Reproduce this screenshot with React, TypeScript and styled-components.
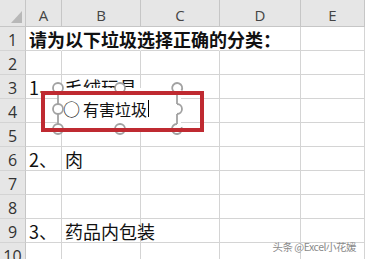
import * as React from 'react';
import styled, { createGlobalStyle } from 'styled-components';

const GlobalStyle = createGlobalStyle`
	html, body {
		margin: 0;
		padding: 0;
		background: #fff;
		overflow: hidden;
	}
`;

const columns = ['A', 'B', 'C', 'D', 'E'];

// cell text per row, keyed by column
const rows: { [row: number]: { [col: string]: string } } = {
	1: { A: '请为以下垃圾选择正确的分类：' },
	3: { A: '1、', B: '毛绒玩具' },
	6: { A: '2、', B: '肉' },
	9: { A: '3、', B: '药品内包装' }
};

const Page = styled.div`
	position: relative;
	width: 365px;
	height: 259px;
	overflow: hidden;
	font-family: 'Noto Sans CJK SC', 'Noto Sans', sans-serif;
`;

const Sheet = styled.div`
	display: grid;
	grid-template-columns: 26px 36px 79px 79px 81px 64px;
	grid-template-rows: 27px repeat(10, 24px);
`;

const Corner = styled.div`
	position: relative;
	background: #e6e6e6;
	border-right: 1px solid #c6c6c6;
	border-bottom: 1px solid #c6c6c6;
`;

const CornerMark = styled.div`
	position: absolute;
	right: 3px;
	bottom: 3px;
	width: 0;
	height: 0;
	border-left: 11px solid transparent;
	border-bottom: 12px solid #b8b8b8;
`;

const ColHeader = styled.div`
	display: flex;
	align-items: center;
	justify-content: center;
	padding-top: 3px;
	background: #e6e6e6;
	border-right: 1px solid #c6c6c6;
	border-bottom: 1px solid #c6c6c6;
	font-family: 'Open Sans', 'Noto Sans', sans-serif;
	font-size: 15px;
	color: #444;
`;

const RowHeader = styled.div`
	display: flex;
	align-items: center;
	justify-content: center;
	padding-top: 3px;
	background: #e6e6e6;
	border-right: 1px solid #c6c6c6;
	border-bottom: 1px solid #d4d4d4;
	font-family: 'Open Sans', 'Noto Sans', sans-serif;
	font-size: 16px;
	color: #333;
`;

const Cell = styled.div<{ $open?: boolean; $bold?: boolean }>`
	display: flex;
	align-items: center;
	padding-left: 3px;
	border-right: 1px solid ${p => (p.$open ? 'transparent' : '#d4d4d4')};
	border-bottom: 1px solid #d4d4d4;
	white-space: nowrap;
	overflow: visible;
	font-size: 18px;
	font-weight: ${p => (p.$bold ? 700 : 400)};
	color: #111;
	line-height: 1;
`;

const TextBox = styled.div`
	position: absolute;
	left: 58px;
	top: 88px;
	width: 123px;
	height: 41px;
	background: #fff;
	display: flex;
	align-items: center;
	padding-left: 5px;
	box-sizing: border-box;
	font-size: 16px;
	color: #111;
`;

const Circle = styled.span`
	font-size: 17px;
	margin-right: 3px;
`;

const Caret = styled.span`
	display: inline-block;
	width: 1px;
	height: 17px;
	margin-left: 1px;
	background: #000;
`;

const Handles = styled.svg`
	position: absolute;
	left: 49px;
	top: 80px;
	fill: #fff;
	stroke: #a2a2a2;
	stroke-width: 1.8;
	overflow: visible;

	path {
		fill: none;
	}
`;

const Highlight = styled.div`
	position: absolute;
	left: 41px;
	top: 91px;
	width: 163px;
	height: 41px;
	box-sizing: border-box;
	border: 4px solid #bf2a31;
`;

const Watermark = styled.div`
	position: absolute;
	right: 9px;
	bottom: 5px;
	font-size: 10.5px;
	letter-spacing: -0.5px;
	color: #8a8a8a;
	text-shadow: 0 0 1px #fff;
	white-space: nowrap;
`;

export default function App() {
	const rowNumbers = Array.from({ length: 10 }, (_, i) => i + 1);

	return (
		<Page>
			<GlobalStyle />
			<Sheet>
				<Corner>
					<CornerMark />
				</Corner>
				{columns.map(c => (
					<ColHeader key={c}>{c}</ColHeader>
				))}
				{rowNumbers.map(r => (
					<React.Fragment key={r}>
						<RowHeader>{r}</RowHeader>
						{columns.map(c => (
							<Cell key={c} $open={r === 1 && c !== 'D' && c !== 'E'} $bold={r === 1}>
								{rows[r]?.[c]}
							</Cell>
						))}
					</React.Fragment>
				))}
			</Sheet>

			<TextBox>
				<Circle>○</Circle>
				<span>有害垃圾</span>
				<Caret />
			</TextBox>

			<Handles width={140} height={60} viewBox="0 0 140 60">
				{/* left edge handles */}
				<line x1={9} y1={12.5} x2={9} y2={24.5} />
				<line x1={9} y1={33.5} x2={9} y2={44.5} />
				<circle cx={9} cy={8} r={5} />
				<circle cx={9} cy={29} r={5} />
				<circle cx={9} cy={49} r={5} />
				{/* middle handles */}
				<circle cx={71} cy={8} r={5} />
				<circle cx={71} cy={49} r={5} />
				{/* right edge arcs */}
				<path d="M128 13 A5 5 0 1 1 132.5 10.5 M128 24 A5 5 0 1 1 128 34 M128 44 A5 5 0 1 0 132.5 47" />
				<line x1={128} y1={13} x2={128} y2={24} />
				<line x1={128} y1={34} x2={128} y2={44} />
			</Handles>

			<Highlight />

			<Watermark>头条 @Excel小花媛</Watermark>
		</Page>
	);
}
